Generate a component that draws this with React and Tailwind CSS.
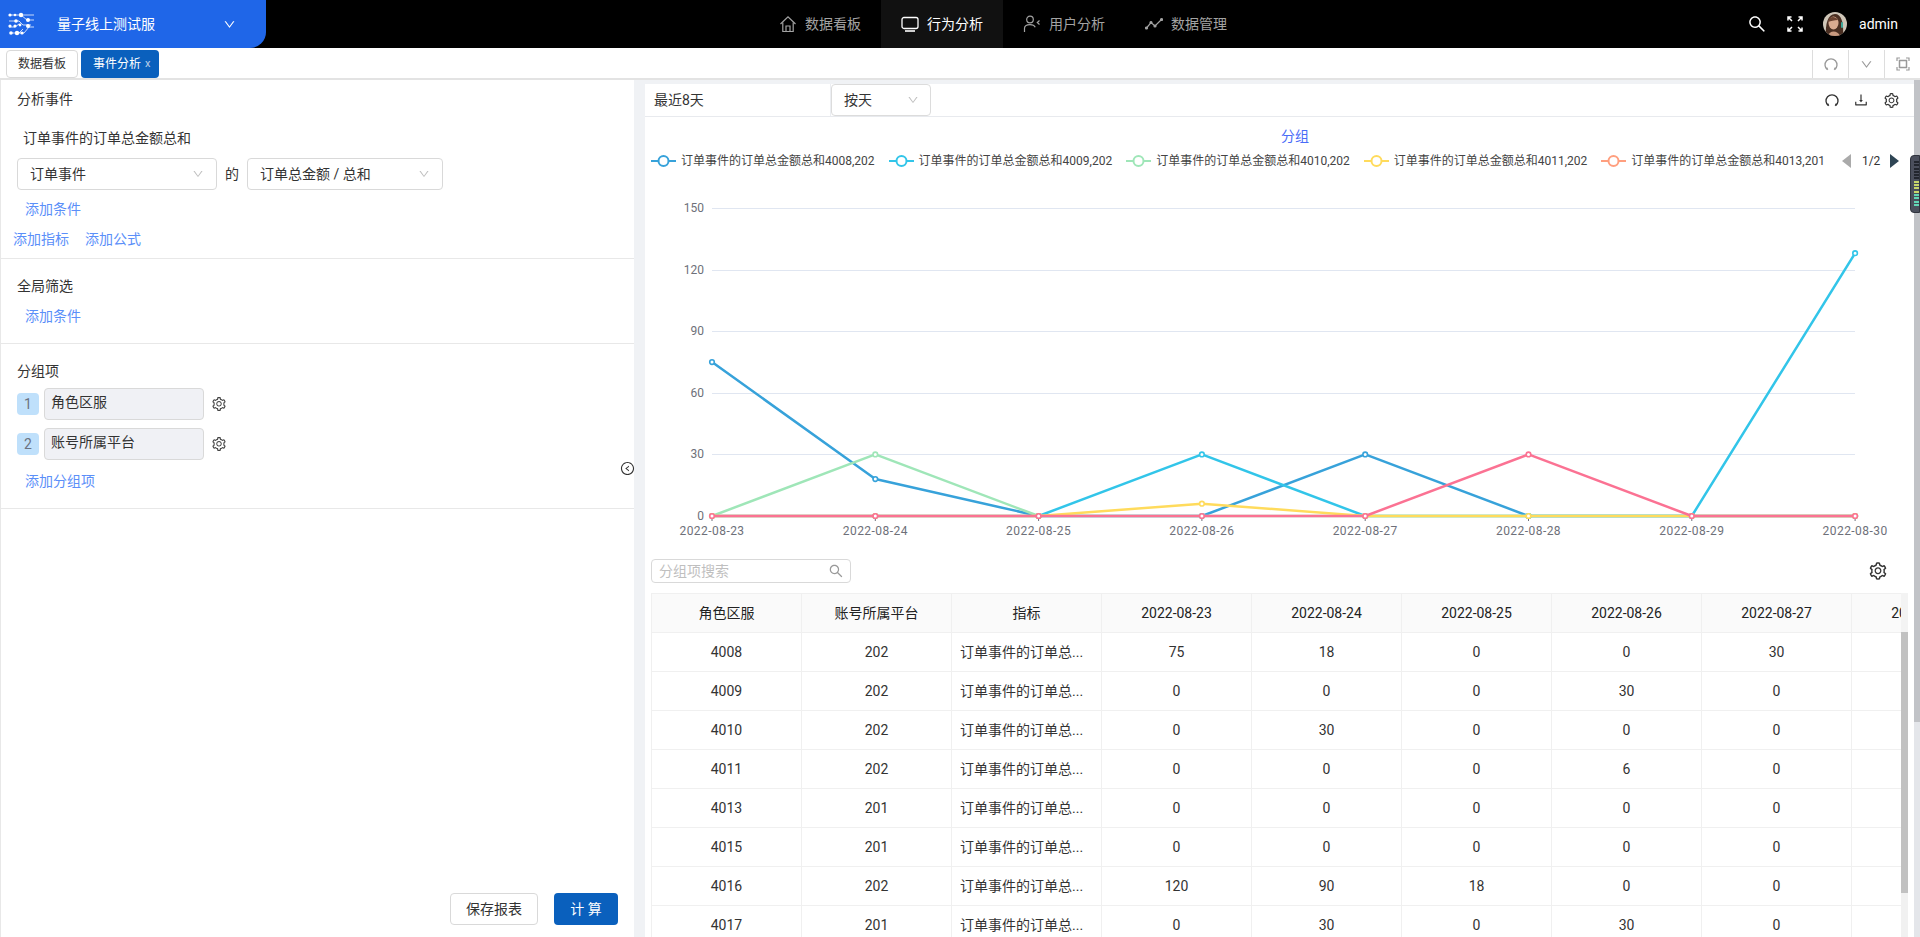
import { AiOutlineSetting, AiOutlineDownload, AiOutlineLeftCircle, AiOutlineDown, AiOutlineSearch } from "react-icons/ai";

const navItems = [
  { label: "数据看板", icon: HomeIcon },
  { label: "行为分析", icon: MonitorIcon, active: true },
  { label: "用户分析", icon: UserIcon },
  { label: "数据管理", icon: TrendIcon },
];

const legend = [
  { name: "订单事件的订单总金额总和4008,202", color: "#37a2da" },
  { name: "订单事件的订单总金额总和4009,202", color: "#32c5e9" },
  { name: "订单事件的订单总金额总和4010,202", color: "#9fe6b8" },
  { name: "订单事件的订单总金额总和4011,202", color: "#ffdb5c" },
  { name: "订单事件的订单总金额总和4013,201", color: "#ff9f7f" },
];

const series = [
  { color: "#37a2da", data: [75, 18, 0, 0, 30, 0, 0, 0] },
  { color: "#32c5e9", data: [0, 0, 0, 30, 0, 0, 0, 128] },
  { color: "#9fe6b8", data: [0, 30, 0, 0, 0, 0, 0, 0] },
  { color: "#ffdb5c", data: [0, 0, 0, 6, 0, 0, 0, 0] },
  { color: "#fb7293", data: [0, 0, 0, 0, 0, 30, 0, 0] },
];

const dates = ["2022-08-23", "2022-08-24", "2022-08-25", "2022-08-26", "2022-08-27", "2022-08-28", "2022-08-29", "2022-08-30"];

const rows = [
  ["4008", "202", 75, 18, 0, 0, 30],
  ["4009", "202", 0, 0, 0, 30, 0],
  ["4010", "202", 0, 30, 0, 0, 0],
  ["4011", "202", 0, 0, 0, 6, 0],
  ["4013", "201", 0, 0, 0, 0, 0],
  ["4015", "201", 0, 0, 0, 0, 0],
  ["4016", "202", 120, 90, 18, 0, 0],
  ["4017", "201", 0, 30, 0, 30, 0],
];

const px = (i) => 712 + i * 163.3;
const py = (v) => 515 - v * 2.053;

function HomeIcon() {
  return (
    <svg width="18" height="18" viewBox="0 0 18 18" fill="none" stroke="currentColor" strokeWidth="1.2">
      <path d="M1.5 9 9 1.8 16.5 9" />
      <path d="M3.8 7.5V16.5H14.2V7.5" />
      <path d="M7 16.5V11H11V16.5" />
    </svg>
  );
}

function MonitorIcon() {
  return (
    <svg width="18" height="18" viewBox="0 0 18 18" fill="none" stroke="currentColor" strokeWidth="1.3">
      <rect x="1" y="2.5" width="16" height="11" rx="2" />
      <path d="M4 16H14" strokeWidth="1.6" />
    </svg>
  );
}

function UserIcon() {
  return (
    <svg width="18" height="18" viewBox="0 0 18 18" fill="none" stroke="currentColor" strokeWidth="1.2">
      <circle cx="7" cy="4.5" r="3.3" />
      <path d="M1.5 17V13.5C1.5 11 4 9.6 7 9.6 9.5 9.6 11.5 10.6 12.2 12.2" />
      <path d="M16.5 5.5 14.3 7.5 16.5 9.5" />
    </svg>
  );
}

function TrendIcon() {
  return (
    <svg width="18" height="18" viewBox="0 0 18 18" fill="none" stroke="currentColor" strokeWidth="1.2">
      <path d="M1.5 13 6 7.5 10 11 16.5 4.5" />
      <circle cx="1.5" cy="13" r="1" fill="currentColor" />
      <circle cx="6" cy="7.5" r="1" fill="currentColor" />
      <circle cx="10" cy="11" r="1" fill="currentColor" />
      <circle cx="16.5" cy="4.5" r="1" fill="currentColor" />
    </svg>
  );
}

function ExpandIcon() {
  return (
    <svg width="16" height="16" viewBox="0 0 16 16" fill="none" stroke="white" strokeWidth="1.5">
      <path d="M1.5 1.5 5 5M1 4.5V1H4.5" />
      <path d="M14.5 1.5 11 5M15 4.5V1H11.5" />
      <path d="M1.5 14.5 5 11M1 11.5V15H4.5" />
      <path d="M14.5 14.5 11 11M15 11.5V15H11.5" />
    </svg>
  );
}

function ReloadIcon({ className }) {
  return (
    <svg className={className} width="14" height="14" viewBox="0 0 14 14" fill="none" stroke="currentColor" strokeWidth="1.3">
      <path d="M3.4 12.6A6 6 0 1 1 10.6 12.6" />
      <path d="M1.8 11.6 3.8 12.8 3.2 10.6" fill="currentColor" strokeWidth="0.6" />
      <path d="M12.2 11.6 10.2 12.8 10.8 10.6" fill="currentColor" strokeWidth="0.6" />
    </svg>
  );
}

function FitIcon() {
  return (
    <svg width="14" height="14" viewBox="0 0 14 14" fill="none" stroke="#999" strokeWidth="1.2">
      <path d="M1 4V1H4M10 1H13V4M13 10V13H10M4 13H1V10" />
      <rect x="3.5" y="3.5" width="7" height="7" strokeWidth="1.5" />
    </svg>
  );
}

function Logo() {
  return (
    <svg width="28" height="26" viewBox="0 0 28 26" fill="none" stroke="white" strokeWidth="1">
      <path d="M2 4H27M14 4 20 9H27M2 10H12L16 14H24M2 16H8L12 13M5 22H17L22 16H27M12 22 16 18" strokeOpacity="0.75" />
      <g fill="white" stroke="none">
        <circle cx="3" cy="4" r="1.6" />
        <circle cx="8" cy="4" r="1.3" />
        <circle cx="14" cy="4" r="2.2" />
        <circle cx="21" cy="9" r="2" />
        <circle cx="9" cy="10" r="1.8" />
        <circle cx="3" cy="15" r="1.6" />
        <circle cx="8" cy="15" r="1.6" />
        <circle cx="13" cy="14" r="1.4" />
        <circle cx="21" cy="15" r="2" />
        <circle cx="4" cy="22" r="1.8" />
        <circle cx="10" cy="22" r="2.2" />
        <circle cx="15" cy="22" r="1.6" />
      </g>
    </svg>
  );
}

function Avatar() {
  return (
    <svg width="24" height="24" viewBox="0 0 24 24" className="rounded-full">
      <rect width="24" height="24" fill="#cfc6b8" />
      <path d="M3 24C2 12 5 2 12 2 18 2 21 10 20 24Z" fill="#4a2f22" />
      <ellipse cx="10.5" cy="11" rx="5" ry="6.5" fill="#d9ab90" />
      <path d="M5 24C6 18 15 18 17 24Z" fill="#c99a80" />
      <path d="M5 10C6 5 11 3 15 8 11 8 8 9 5 10Z" fill="#6a4230" />
      <rect x="18" y="10" width="2" height="6" rx="1" fill="#3fa89a" />
    </svg>
  );
}

function Select({ label, className }) {
  return (
    <div className={"flex h-8 items-center justify-between rounded-sm border border-[#d9d9d9] bg-white pl-3 pr-[12px] " + className}>
      <span>{label}</span>
      <AiOutlineDown className="text-[12px] text-[#bfbfbf]" />
    </div>
  );
}

function LinkText({ children, className = "" }) {
  return <span className={"h-5 leading-5 text-[#5b8ff9] " + className}>{children}</span>;
}

function GroupRow({ index, label, className = "" }) {
  return (
    <div className={"flex items-center " + className}>
      <div className="flex h-[22px] w-[22px] items-center justify-center rounded-sm bg-[#bfe0fb] text-[#6b7280]">{index}</div>
      <div className="ml-[5px] h-8 w-[160px] rounded-sm border border-[#d9d9d9] bg-[#f0f1f5] pl-[6px] leading-[26px]">{label}</div>
      <AiOutlineSetting className="ml-[7px] text-[16px] text-[#444]" />
    </div>
  );
}

function LeftPanel() {
  return (
    <div className="relative flex w-[634px] flex-col border-l border-[#e8e8e8] bg-white">
      <section className="flex flex-col border-b border-[#e8e8e8] pb-[9px] pt-[9px]">
        <div className="ml-4 h-5 leading-5">分析事件</div>
        <div className="ml-[22px] mt-[19px] h-5 leading-5">订单事件的订单总金额总和</div>
        <div className="ml-4 mt-[10px] flex items-center">
          <Select label="订单事件" className="w-[200px]" />
          <span className="w-[30px] text-center">的</span>
          <Select label="订单总金额 / 总和" className="w-[196px]" />
        </div>
        <LinkText className="ml-6 mt-[9px]">添加条件</LinkText>
        <div className="ml-3 mt-[10px] flex gap-4">
          <LinkText>添加指标</LinkText>
          <LinkText>添加公式</LinkText>
        </div>
      </section>
      <section className="flex flex-col border-b border-[#e8e8e8] pb-[17px] pt-[17px]">
        <div className="ml-4 h-5 leading-5">全局筛选</div>
        <LinkText className="ml-6 mt-[10px]">添加条件</LinkText>
      </section>
      <section className="flex flex-col border-b border-[#e8e8e8] pb-[17px] pt-[17px]">
        <div className="ml-4 h-5 leading-5">分组项</div>
        <GroupRow index="1" label="角色区服" className="ml-4 mt-[7px]" />
        <GroupRow index="2" label="账号所属平台" className="ml-4 mt-2" />
        <LinkText className="ml-6 mt-[11px]">添加分组项</LinkText>
      </section>
      <AiOutlineLeftCircle className="absolute left-[619px] top-[381px] text-[15px] text-[#333]" />
      <div className="mt-auto flex justify-end gap-4 pb-3 pr-4">
        <button className="h-8 w-[88px] rounded-sm border border-[#d9d9d9] bg-white text-[14px]">保存报表</button>
        <button className="h-8 w-16 rounded-sm bg-[#0a60bd] text-[14px] text-white">计 算</button>
      </div>
    </div>
  );
}

function Chart() {
  return (
    <svg className="block" width="1269" height="377" viewBox="645 175 1269 377" fontSize="12" fill="#6e7079">
      {[150, 120, 90, 60, 30, 0].map((v) => (
        <g key={v}>
          <line x1="712" x2="1855" y1={Math.round(py(v)) + 0.5} y2={Math.round(py(v)) + 0.5} stroke="#e0e6f1" />
          <text x="704" y={py(v) + 4} textAnchor="end">{v}</text>
        </g>
      ))}
      {dates.map((d, i) => (
        <g key={d}>
          <line x1={px(i)} x2={px(i)} y1="515" y2="520" stroke="#6e7079" />
          <text x={px(i)} y="534" textAnchor="middle" letterSpacing="0.45">{d}</text>
        </g>
      ))}
      {series.map((s) => (
        <g key={s.color}>
          <polyline fill="none" stroke={s.color} strokeWidth="2.5" strokeLinejoin="round" points={s.data.map((v, i) => px(i) + "," + py(v)).join(" ")} />
          {s.data.map((v, i) => (
            <circle key={i} cx={px(i)} cy={py(v)} r="2.3" fill="white" stroke={s.color} strokeWidth="1.6" />
          ))}
        </g>
      ))}
    </svg>
  );
}

function Legend() {
  return (
    <div className="flex h-[14px] items-center pl-[6px] text-[12px] text-[#444]">
      {legend.map((l) => (
        <div key={l.name} className="mr-[14px] flex items-center gap-[5px]">
          <svg width="25" height="14" viewBox="0 0 25 14" fill="none" stroke={l.color} strokeWidth="2">
            <path d="M0 7H25" />
            <circle cx="12.5" cy="7" r="5" fill="white" />
          </svg>
          <span className="whitespace-nowrap">{l.name}</span>
        </div>
      ))}
      <svg className="ml-[3px]" width="9" height="14" viewBox="0 0 9 14"><path d="M9 0V14L0 7Z" fill="#aaa" /></svg>
      <span className="ml-[11px] text-[#333]">1/2</span>
      <svg className="ml-[10px]" width="9" height="14" viewBox="0 0 9 14"><path d="M0 0V14L9 7Z" fill="#2f4554" /></svg>
    </div>
  );
}

function DataTable() {
  return (
    <div className="ml-[6px] flex min-h-0 flex-1">
      <div className="w-[1250px] overflow-hidden">
        <table className="w-[1650px] table-fixed border-collapse border-l border-t border-[#f0f0f0] text-center text-[14px] text-[#333]">
          <thead>
            <tr className="bg-[#fafafa] text-[#222]">
              {["角色区服", "账号所属平台", "指标", ...dates].map((h) => (
                <th key={h} className="h-[39px] w-[150px] border-b border-r border-[#f0f0f0] font-normal">{h}</th>
              ))}
            </tr>
          </thead>
          <tbody>
            {rows.map((r) => (
              <tr key={r[0]}>
                <td className="h-[39px] border-b border-r border-[#f0f0f0]">{r[0]}</td>
                <td className="border-b border-r border-[#f0f0f0]">{r[1]}</td>
                <td className="whitespace-nowrap border-b border-r border-[#f0f0f0] pl-2 text-left">订单事件的订单总...</td>
                {r.slice(2).map((v, i) => (
                  <td key={i} className="border-b border-r border-[#f0f0f0]">{v}</td>
                ))}
                <td className="border-b border-r border-[#f0f0f0]" />
                <td className="border-b border-r border-[#f0f0f0]" />
                <td className="border-b border-r border-[#f0f0f0]" />
              </tr>
            ))}
          </tbody>
        </table>
      </div>
      <div className="flex w-[7px] flex-col bg-[#f1f1f1]">
        <div className="h-[39px] bg-[#f3f3f3]" />
        <div className="h-[261px] bg-[#c1c1c1]" />
      </div>
    </div>
  );
}

function RightPanel() {
  return (
    <div className="flex min-w-0 flex-1 flex-col pt-1">
      <div className="flex h-[33px] items-center border-b border-[#e8eaee] bg-white">
        <div className="flex h-8 w-[186px] items-center border-r border-[#eceef2] pl-[9px]">最近8天</div>
        <div className="flex h-8 w-[100px] items-center justify-between rounded-sm border border-[#dcdcdc] pl-3 pr-[11px]">
          <span>按天</span>
          <AiOutlineDown className="text-[12px] text-[#bfbfbf]" />
        </div>
        <div className="ml-auto flex items-center gap-[14px] pr-[14px] text-[#333]">
          <ReloadIcon />
          <AiOutlineDownload className="text-[16px]" />
          <AiOutlineSetting className="text-[17px]" />
        </div>
      </div>
      <div className="flex min-h-0 flex-1 flex-col bg-white">
        <div className="mt-[9px] h-5 pl-[31px] text-center leading-5 text-[#4a6cf7]">分组</div>
        <div className="mt-[8px]"><Legend /></div>
        <div className="mt-2"><Chart /></div>
        <div className="mt-[6px] flex h-6 items-center justify-between pl-[6px] pr-[26px]">
          <div className="flex h-6 w-[200px] items-center justify-between rounded-sm border border-[#d9d9d9] pl-[7px] pr-[6px] text-[#bfbfbf]">
            <span>分组项搜索</span>
            <AiOutlineSearch className="text-[16px] text-[#999]" />
          </div>
          <AiOutlineSetting className="text-[20px] text-[#333]" />
        </div>
        <div className="mt-[10px] min-h-0 flex-1 overflow-hidden">
          <DataTable />
        </div>
      </div>
    </div>
  );
}

export default function App() {
  return (
    <div className="relative flex h-[937px] flex-col overflow-hidden bg-white font-[Roboto,'Noto_Sans_CJK_SC',sans-serif] text-[14px] text-[#333]">
      <header className="flex h-12 shrink-0 items-center bg-black">
        <div className="flex h-12 w-[266px] items-center rounded-br-[16px] bg-[#1f66e8] pl-[7px] pr-[30px] text-white">
          <Logo />
          <span className="ml-[22px]">量子线上测试服</span>
          <AiOutlineDown className="ml-auto text-[13px]" />
        </div>
        <nav className="ml-[493px] flex h-12">
          {navItems.map(({ label, icon: Icon, active }) => (
            <div key={label} className={active ? "flex items-center gap-2 bg-[#111] px-5 text-white" : "flex items-center gap-2 px-5 text-[#a3a3a3]"}>
              <Icon />
              <span>{label}</span>
            </div>
          ))}
        </nav>
        <div className="ml-auto flex items-center pr-[22px] text-white">
          <AiOutlineSearch className="text-[20px]" />
          <div className="ml-5"><ExpandIcon /></div>
          <div className="ml-5"><Avatar /></div>
          <span className="ml-3">admin</span>
        </div>
      </header>

      <div className="flex h-8 shrink-0 items-start border-b-2 border-[#e3e3e3] pt-[2px] text-[12px]">
        <div className="ml-[6px] flex h-[28px] w-[72px] items-center justify-center rounded-sm border border-[#d9d9d9]">数据看板</div>
        <div className="ml-[3px] flex h-[28px] w-[78px] items-center rounded-sm bg-[#0a60bd] pl-3 text-white">
          事件分析
          <span className="ml-1 text-[11px] opacity-70">x</span>
        </div>
        <div className="ml-auto flex h-[28px] text-[#999]">
          <div className="flex w-9 items-center justify-center border-l border-[#ddd]"><ReloadIcon /></div>
          <div className="flex w-9 items-center justify-center border-l border-[#ddd]"><AiOutlineDown className="text-[13px]" /></div>
          <div className="flex w-[36px] items-center justify-center border-l border-[#ddd]"><FitIcon /></div>
        </div>
      </div>

      <div className="flex min-h-0 flex-1 bg-[#f0f2f5]">
        <LeftPanel />
        <div className="w-[11px] shrink-0" />
        <RightPanel />
        <div className="w-[6px] shrink-0 bg-[#e4e6ea]">
          <div className="h-[642px] bg-[#c1c3c7]" />
        </div>
      </div>

      {/* floating widget stuck to the right edge */}
      <div className="absolute right-0 top-[155px] flex h-[58px] w-[10px] flex-col gap-[1.3px] rounded-l-[4px] border border-[#30343e] bg-[#4b4f5c] pl-[3px] pt-[5px]">
        {Array.from({ length: 14 }, (_, i) => (
          <div key={i} className={i < 6 ? "h-[2px] w-[5px] bg-[#23262e]" : i < 10 ? "h-[2px] w-[5px] bg-[#c7d66a]" : "h-[2px] w-[5px] bg-[#62d6b4]"} />
        ))}
      </div>
    </div>
  );
}
